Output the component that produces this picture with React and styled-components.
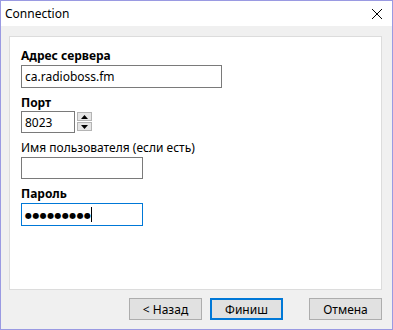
import React from "react";
import styled, { createGlobalStyle } from "styled-components";

const Global = createGlobalStyle`
  html, body { margin: 0; padding: 0; background: #f0f0f0; }
  * { box-sizing: border-box; }
`;

const Window = styled.div`
  width: 393px;
  height: 330px;
  border: 1px solid #9a9ae2;
  display: flex;
  flex-direction: column;
  font-family: "Noto Sans", "DejaVu Sans", sans-serif;
  font-size: 12px;
  color: #000;
  background: #f0f0f0;
`;

const TitleBar = styled.div`
  height: 25px;
  background: #fff;
  display: flex;
  align-items: center;
  justify-content: space-between;
  padding: 0 9px 0 4px;
`;

const Title = styled.span`
  font-size: 12px;
  line-height: 15px;
`;

const Body = styled.div`
  flex: 1;
  display: flex;
  flex-direction: column;
  padding: 10px 10px 0 8px;
`;

const Panel = styled.div`
  height: 254px;
  background: #fff;
  border: 1px solid #dcdcdc;
  padding: 11px 11px;
  display: flex;
  flex-direction: column;
  align-items: flex-start;
`;

const Label = styled.div`
  font-weight: ${(p) => (p.$bold ? 700 : 400)};
  line-height: 15px;
  margin-top: ${(p) => p.$mt || 0}px;
  margin-bottom: ${(p) => p.$mb || 2}px;
  color: #000;
`;

const TextBox = styled.div`
  width: ${(p) => p.$w}px;
  height: ${(p) => p.$h || 23}px;
  border: 1px solid ${(p) => (p.$focus ? "#0078d7" : "#7a7a7a")};
  background: #fff;
  padding: 0 3px;
  display: flex;
  align-items: center;
  line-height: 15px;
  white-space: nowrap;
`;

const Dots = styled.span`
  font-size: 8px;
  letter-spacing: 0.4px;
  line-height: 15px;
`;

const Caret = styled.span`
  display: inline-block;
  width: 1px;
  height: 15px;
  background: #000;
  margin-left: 0;
`;

const PortRow = styled.div`
  display: flex;
  align-items: flex-start;
  gap: 2px;
`;

const Spinner = styled.div`
  display: flex;
  flex-direction: column;
  gap: 1px;
  padding-top: 1px;
`;

const SpinBtn = styled.div`
  width: 15px;
  height: 9px;
  background: #e5e5e5;
  border: 1px solid #b4b4b4;
  display: flex;
  align-items: center;
  justify-content: center;
`;

const Footer = styled.div`
  display: flex;
  justify-content: flex-end;
  padding: 8px 0 0;
`;

const Button = styled.div`
  width: 73px;
  height: 22px;
  margin-left: ${(p) => p.$ml || 0}px;
  background: #e1e1e1;
  border: ${(p) => (p.$default ? "2px solid #0078d7" : "1px solid #adadad")};
  display: flex;
  align-items: center;
  justify-content: center;
  line-height: 15px;
`;

const Arrow = ({ up }) => (
  <svg width="7" height="4" viewBox="0 0 7 4">
    {up ? <polygon points="0,4 7,4 3.5,0" fill="#000" /> : <polygon points="0,0 7,0 3.5,4" fill="#000" />}
  </svg>
);

export default function App() {
  return (
    <>
      <Global />
      <Window>
        <TitleBar>
          <Title>Connection</Title>
          <svg width="12" height="12" viewBox="0 0 12 12">
            <path d="M1 1 L11 11 M11 1 L1 11" stroke="#000" strokeWidth="1" />
          </svg>
        </TitleBar>
        <Body>
          <Panel>
            <Label $bold>Адрес сервера</Label>
            <TextBox $w={201}>ca.radioboss.fm</TextBox>
            <Label $bold $mt={7} $mb={1}>Порт</Label>
            <PortRow>
              <TextBox $w={54} $h={22}>8023</TextBox>
              <Spinner>
                <SpinBtn><Arrow up /></SpinBtn>
                <SpinBtn><Arrow /></SpinBtn>
              </Spinner>
            </PortRow>
            <Label $mt={7} $mb={2}>Имя пользователя (если есть)</Label>
            <TextBox $w={122} $h={22} />
            <Label $bold $mt={7} $mb={2}>Пароль</Label>
            <TextBox $w={122} $h={23} $focus>
              <Dots>●●●●●●●●●</Dots>
              <Caret />
            </TextBox>
          </Panel>
          <Footer>
            <Button>&lt; Назад</Button>
            <Button $default $ml={8}>Финиш</Button>
            <Button $ml={26}>Отмена</Button>
          </Footer>
        </Body>
      </Window>
    </>
  );
}
